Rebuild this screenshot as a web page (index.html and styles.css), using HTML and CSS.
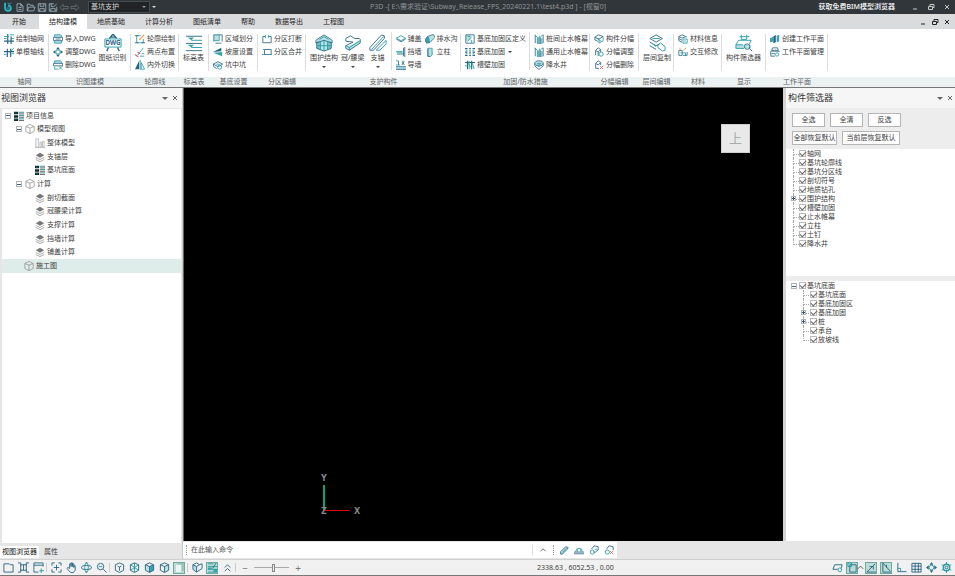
FILE: index.html
```
<!DOCTYPE html>
<html lang="zh-CN">
<head>
    <meta charset="UTF-8">
    <meta name="viewport" content="width=device-width, initial-scale=1.0">
    <title>P3D</title>
    <link rel="stylesheet" href="styles.css">
</head>
<body>

<!-- Icon sprite -->
<svg class="sprite" aria-hidden="true">
    <symbol id="logo" viewBox="0 0 12 12"><path d="M2.500 1v6.500a3.500 3.200 0 1 0 3.500-3.200" fill="none" stroke="#25b9c4" stroke-width="2.200"/><path d="M5.500 1l4.500 1-3 1.500z" fill="#25b9c4"/><circle cx="6" cy="7.500" r="1.200" fill="#25b9c4"/></symbol>
    <symbol id="new" viewBox="0 0 12 12"><path d="M2 1h5l3 3v7H2zM7 1v3h3M4 6h4M4 8.500h4"/></symbol>
    <symbol id="open" viewBox="0 0 12 12"><path d="M1 10.500V1.500h3l1 1.500h4v2M1 10.500l2-5h8.500l-2 5z"/></symbol>
    <symbol id="save" viewBox="0 0 12 12"><path d="M1 1h10v10H1zM3.500 1v3.500h5V1M3 11V7.500h6V11"/></symbol>
    <symbol id="saveas" viewBox="0 0 12 12"><path d="M11 5v6H1V1h6M3.500 1v3.500h3M3 11V7.500h6V11M6 6l5-5"/></symbol>
    <symbol id="undo" viewBox="0 0 12 12"><path d="M.5 6L5 2v2.500h6.500v3H5V10z"/></symbol>
    <symbol id="redo" viewBox="0 0 12 12"><path d="M11.500 6L7 2v2.500H.5v3H7V10z"/></symbol>

    <symbol id="axis" viewBox="0 0 12 12"><path d="M4.500 0v12M8.500 3v9M0 8.500h12" stroke-width="1.400"/><path class="t" d="M0 3h6M0 5.500h3M7 1h5M8 5.500h4"/></symbol>
    <symbol id="axisone" viewBox="0 0 12 12"><path d="M4 2v10M8 2v10M0 5.500h12" stroke-width="1.400"/><path class="t" d="M8 5l4-4M0 9h3M9 8h3"/></symbol>
    <symbol id="dwgin" viewBox="0 0 12 12"><path class="f" d="M2 1h8v3H2zM2 8h8v3H2z"/><path class="t" d="M2 4V1h7l1 1v2M2 8v3h8V8"/><path d="M.5 4h11v4H.5zM3 6h6"/></symbol>
    <symbol id="dwgset" viewBox="0 0 12 12"><path class="n" d="M6 0l2.500 3h-5zM6 12l2.500-3h-5zM0 6l3-2.500v5zM12 6L9 3.500v5z"/><circle class="t" cx="6" cy="6" r="2.500"/></symbol>
    <symbol id="dwgdel" viewBox="0 0 12 12"><path class="f" d="M2 1h8v3H2z"/><path class="t" d="M2 4V1h7l1 1v2M2 8v3h4M7 7.500l4 4M11 7.500l-4 4"/><path d="M.5 4h11v3H.5z"/></symbol>
    <symbol id="outline" viewBox="0 0 12 12"><path class="t" d="M2 10.500V2h5M2 10.500h8V6"/><path d="M0 2h4M0 10.500h4M8 10.500h4"/><path class="o" d="M5 7l6-6" stroke-width="1.500"/></symbol>
    <symbol id="twopt" viewBox="0 0 12 12"><path class="t" d="M3 10l7-9M6 11h5M8 8h3"/><path class="r" d="M0 9l4 3M3 6l3 2" stroke-width="1.500"/></symbol>
    <symbol id="flip" viewBox="0 0 12 12"><path class="n" d="M5 1v10H0z"/><path class="t" d="M7.500 3v8H11.500zM6.200 0v12"/></symbol>
    <symbol id="region" viewBox="0 0 12 12"><path class="f" d="M1 1h6v7H1z"/><path d="M1 9V1h10v8M3 11h7"/><path class="t" d="M7.500 1v7H1"/></symbol>
    <symbol id="slope" viewBox="0 0 12 12"><path class="n" d="M0 6l10-5v4z"/><path class="tf" d="M0 7l11-1v5z"/></symbol>
    <symbol id="pit" viewBox="0 0 12 12"><path d="M.5 5L6 2l5.500 3L6 8zM.5 5v2.500l4 3"/><circle class="t" cx="8" cy="8.500" r="2.500"/><path class="t" d="M4 5h4"/></symbol>
    <symbol id="split" viewBox="0 0 12 12"><path d="M1 10.500V3h3M8 3h3v7.500H1"/><path class="t" d="M4 1v4M8 1v4"/></symbol>
    <symbol id="merge" viewBox="0 0 12 12"><path d="M3 3h8v6H3z"/><path class="t" d="M0 9h4M3 3H1M9 9h3"/></symbol>
    <symbol id="cover" viewBox="0 0 12 12"><path class="t" d="M.5 5L6 2l5.500 3L6 8z"/><path d="M.5 6L6 9.500 11.500 6"/></symbol>
    <symbol id="retain" viewBox="0 0 12 12"><path d="M10.500 0v12M9 1v10M1 8.500h8"/><path class="t" d="M0 5.500h8M1 7h7"/></symbol>
    <symbol id="guide" viewBox="0 0 12 12"><path d="M0 8h12M0 11.500h12M3 1v5M7 1l3 5M10 1L7 6"/><path class="t" d="M0 1h3M0 6h5M0 9.700h12"/></symbol>
    <symbol id="ditch" viewBox="0 0 12 12"><path class="tf" d="M0 7l3-4 3 1v6l-4 1z"/><path class="f" d="M5 3l5-2 1 3-5 6z"/><path d="M0 7l3-4 7-2.500L12 4l-6 6-4 1z"/></symbol>
    <symbol id="column" viewBox="0 0 12 12"><path class="f" d="M4 2h5v8H4z"/><path class="t" d="M3.500 1.500h5v8l-2 2h-3z"/><path d="M3.500 2v9h3"/></symbol>
    <symbol id="reinf" viewBox="0 0 12 12"><path class="f" d="M1 1h6v7H1z"/><path d="M1 11V1h10v10z"/><path class="t" d="M3 9l5-6M3 3h3M8 7v4"/></symbol>
    <symbol id="dots" viewBox="0 0 12 12"><path d="M0 2h3M5 2h2M9 2h3M0 6h3M5 6h2M9 6h3M0 10h3M5 10h2M9 10h3" stroke-width="1.500"/><path class="t" d="M1 4h2M5 4h2M9 4h2M1 8h2M5 8h2M9 8h2"/></symbol>
    <symbol id="groove" viewBox="0 0 12 12"><path d="M3 1v10M8 1v10M0 3h12" stroke-width="1.400"/><path class="t" d="M4 4l3 5M9 4l2 7M0 7h3M5 1v10"/></symbol>
    <symbol id="curtain" viewBox="0 0 12 12"><path d="M1.500 1v10M5 4v8M8 4v8M11 1v10"/><path class="t" d="M1 1l3 3v8M11 1L8 3M6.500 2v10M9.500 5v7"/></symbol>
    <symbol id="well" viewBox="0 0 12 12"><ellipse class="f" cx="6" cy="4" rx="4.500" ry="2.500"/><ellipse cx="6" cy="4" rx="5" ry="3"/><path d="M1 4v3l5 4.500L11 7V4"/><path class="t" d="M4 4h4L6 8z"/></symbol>
    <symbol id="panel" viewBox="0 0 12 12"><path d="M1 4l4-3 6 2-5 3zM1 4v3l4 2"/><path class="t" d="M6 6v5l5-3V4M3 5l6 4"/></symbol>
    <symbol id="paneledit" viewBox="0 0 12 12"><path d="M2 10V4l3-3 3 2v3M2 4l3 2 3-3M5 6v5"/><circle class="t" cx="8.500" cy="8.500" r="2.500"/></symbol>
    <symbol id="paneldel" viewBox="0 0 12 12"><path d="M2 10V4l3-3 3 2v3M2 4l3 2 3-3M2 10h4"/><path class="r" d="M7 7l4 4M11 7l-4 4"/></symbol>
    <symbol id="matinfo" viewBox="0 0 12 12"><path d="M1 3l4-2 4 2-4 2zM1 3v5l4 2M1 5.500l4 2"/><path class="t" d="M6 6h5v5H6zM7.500 8.500h2M9 4l2-1"/></symbol>
    <symbol id="modify" viewBox="0 0 12 12"><path d="M1 4h4v6H1zM6 10h5V6"/><path class="t" d="M3 7h6v4"/><path class="o" d="M6 4l4-3M2 1l1 2"/></symbol>
    <symbol id="plane" viewBox="0 0 12 12"><path class="tf" d="M0 5l4-2v6l-4 1z"/><path class="n" d="M4 3l3-2v9l-3 1z"/><path class="tf" d="M8 2l3-1v8l-3 1z"/></symbol>
    <symbol id="planeman" viewBox="0 0 12 12"><path d="M3 1h6l1 3H2zM1 11V5h10v1M1 11h5M2 8h4"/><circle class="t" cx="8.500" cy="9" r="2"/></symbol>

    <symbol id="level" viewBox="0 0 20 20"><path d="M1 2.500h18M1 10.500h18M1 18.500h18"/><path class="tf" d="M3 4h7l-3 3zM3 12h7l-3 3z"/><path class="t" d="M7 7h12M7 15h12"/></symbol>
    <symbol id="wall" viewBox="0 0 20 20"><path class="f" d="M2 7l8-5 8 5v9l-8 3-8-3z"/><path class="tf" d="M2 8h4v9l-4-1zM14 8h4v8l-4 1z" opacity=".5"/><path d="M1 7l9-6 9 6v3l-9-3-9 3zM2 9v7l8 3 8-3V9"/><path class="t" d="M6 8v10M10 7v12M14 8v10M2 13h16M5 6l5-3 5 3"/></symbol>
    <symbol id="beam" viewBox="0 0 20 20"><path class="f" d="M2 15l10-5 6-4v4L6 18z"/><path d="M2 5l5-3 5 3 5 0 1 1v4L6 18l-4-2v-3l8-4-8-1z"/><path class="t" d="M2 13l4 2 11-7M6 15v3"/></symbol>
    <symbol id="anchor" viewBox="0 0 20 20"><path d="M1 15L14 1l3 1v3L5 18H1z"/><path class="t" d="M3 17L16 3M8 18L19 7v4l-7 7z"/></symbol>
    <symbol id="copyfloor" viewBox="0 0 20 20"><path d="M2 5l7-4 7 4-7 4zM2 9l7 4 4-2M2 13l7 4"/><path class="t" d="M5 5h8M11 12l3-2 5 4v4l-3 1-5-4zM5 11l4 3"/></symbol>
    <symbol id="filter" viewBox="0 0 20 20"><path class="f" d="M1 12h17v4H1z"/><path class="t" d="M5 3h11M7 1v5h6V1M1 12l3-5h14l-2 4M1 12v4h9M1 12h8"/><circle cx="13.500" cy="14" r="3"/><path d="M16 16l3 3"/></symbol>

    <symbol id="layers" viewBox="0 0 12 12"><path d="M1 4l5-3 5 3-5 3z" fill="#777" stroke="none"/><path d="M1 6.500l5 2.500 5-2.500M1 9l5 2.500L11 9" stroke="#999"/></symbol>
    <symbol id="cube" viewBox="0 0 12 12"><path d="M1 3L6 .5 11 3v6l-5 2.500L1 9zM1 3l5 2 5-2M6 5v6" stroke="#999"/></symbol>
    <symbol id="list" viewBox="0 0 12 12"><path d="M0 1h5v3H0zM0 5h5v3H0zM0 9h5v3H0z" fill="#10282b" stroke="none"/><path d="M1 2.500h2M1 10.500h2M6 1.500h6M6 5.500h6M6 9.500h6" stroke="#167d80"/><path d="M6 3.500h6M6 7.500h6M6 11.500h6" stroke="#444"/></symbol>
    <symbol id="bars" viewBox="0 0 12 12"><path d="M1 11V1h3v10zM6 11V5h2v6zM9 11V4h2v7zM0 11.500h12" stroke="#b5b5b5"/></symbol>

    <symbol id="window" viewBox="0 0 12 12"><path d="M1 2h6l1 1h3v8H1z"/></symbol>
    <symbol id="fit" viewBox="0 0 12 12"><path d="M3 3h6v6H3zM0 1h3v3M12 1H9v3M0 11h3V8M12 11H9V8M6 3v6"/></symbol>
    <symbol id="tile" viewBox="0 0 12 12"><path d="M1 8V1h10v4M1 3.500h10M1 8v3h5"/><path class="t" d="M9 7v5M7 9.500h5"/></symbol>
    <symbol id="move" viewBox="0 0 12 12"><path d="M1 4V1h3M8 1h3v3M11 8v3H8M4 11H1V8M6 3v6M3 6h6"/></symbol>
    <symbol id="hand" viewBox="0 0 12 12"><path d="M4 7V2h1.500v3V1H7v4V2h1.500v4V4H10v5l-2 2.500H5L1 7l1-1z"/></symbol>
    <symbol id="orbit" viewBox="0 0 12 12"><ellipse cx="6" cy="6" rx="5.500" ry="2.200"/><ellipse class="t" cx="6" cy="6" rx="2" ry="5"/><path d="M5 1h2M5 11h2"/></symbol>
    <symbol id="zoomicon" viewBox="0 0 12 12"><circle cx="5" cy="5" r="3.500"/><path d="M8 8l3.500 3.500"/><path class="t" d="M3 5h4"/></symbol>
    <symbol id="box" viewBox="0 0 12 12"><path d="M1.500 3L6 1l4.500 2v6L6 11.500 1.500 9z"/><path d="M4 4.500l2 1 2-1M6 5.500v4"/></symbol>
    <symbol id="boxwire" viewBox="0 0 12 12"><path d="M1.500 3L6 1l4.500 2v6L6 11.500 1.500 9z"/><path class="t" d="M1.500 3L6 6l4.500-3M6 1v10M1.500 9L6 6l4.500 3"/></symbol>
    <symbol id="boxdark" viewBox="0 0 12 12"><path class="tf" d="M6 5l4.500-2v6L6 11.500z"/><path class="f" d="M1.500 3L6 5v6L1.500 9z"/><path d="M1.500 3L6 1l4.500 2v6L6 11.500 1.500 9zM1.500 3L6 5l4.500-2M6 5v6"/></symbol>
    <symbol id="boxlight" viewBox="0 0 12 12"><path class="f" d="M6 5l4.500-2v6L6 11.500z"/><path d="M1.500 3L6 1l4.500 2v6L6 11.500 1.500 9zM1.500 3L6 5l4.500-2M6 5v6"/></symbol>
    <symbol id="shaded" viewBox="0 0 12 12"><path d="M2 3l3-2h6v8l-3 2H2z" fill="#9cc4bd" stroke="none"/><path d="M2 3h6v8H2z" fill="#edf5f3" stroke="none"/></symbol>
    <symbol id="section" viewBox="0 0 12 12"><path class="f" d="M1 3l4 2v6L1 8z"/><path d="M1 3l4-2 3 2 3-1v5l-6 4-4-3zM1 3l4 2 3-2M5 5v6"/></symbol>
    <symbol id="props" viewBox="0 0 12 12"><path class="tf" d="M1 6h4v2H1zM7 8h4v3H7z"/><path class="t" d="M1 2h6M1 5h10M1 8h10M1 11h10"/><path d="M6 7l4-6"/></symbol>
    <symbol id="up2" viewBox="0 0 12 12"><path d="M3 6l3-3 3 3M3 10l3-3 3 3"/></symbol>
    <symbol id="up" viewBox="0 0 12 12"><path d="M3 7.500l3-3 3 3" stroke="#555"/></symbol>
    <symbol id="pen" viewBox="0 0 12 12"><path class="f" d="M2 8l6-6 3 2-7 7H2z"/><path d="M2 8l6-6 3 1-1 2-6 6H2z"/><path class="t" d="M4 9l5-5"/></symbol>
    <symbol id="arch" viewBox="0 0 12 12"><path class="t" d="M2 8a4 4 0 0 1 8 0M4 8V5M8 8V5"/><path d="M0 8.500h12M0 10.500h12"/></symbol>
    <symbol id="link" viewBox="0 0 12 12"><path d="M3 5l3-4 5 1v4L7 9 5 8"/><circle class="t" cx="4" cy="8.500" r="2.500"/><path class="t" d="M7 5h3"/></symbol>
    <symbol id="linkdel" viewBox="0 0 12 12"><path d="M3 5l3-4 5 1v4"/><circle class="t" cx="4" cy="8.500" r="2.500"/><path class="r" d="M7 7l4 4M11 7l-4 4"/></symbol>
    <symbol id="view" viewBox="0 0 12 12"><path d="M1 8l2-5h8l-1 4M1 8h5"/><circle class="t" cx="8.500" cy="8.500" r="2"/></symbol>
    <symbol id="snap" viewBox="0 0 12 12"><path d="M3 3h7v8H3z"/><path class="t" d="M1 1h4v4H1z"/></symbol>
    <symbol id="angle" viewBox="0 0 12 12"><path d="M1 11h10M1 11l9-9M4 5h4v3"/></symbol>
    <symbol id="polar" viewBox="0 0 12 12"><path d="M2 1v10h9M2 1l8 9M6 3v3"/></symbol>
    <symbol id="ortho" viewBox="0 0 12 12"><path d="M2 1v9.500h9.500"/><path class="t" d="M2 7h3v3"/></symbol>
    <symbol id="grid" viewBox="0 0 12 12"><path d="M1 1.500h10v9.500H1zM1 4.500h10M1 8h10M4.500 1v10M8 1v10"/></symbol>
    <symbol id="target" viewBox="0 0 12 12"><path class="n" d="M6 0l2 3H4zM6 12l2-3H4zM0 6l3-2.500v5zM12 6L9 3.500v5z"/><circle class="t" cx="6" cy="6" r="2.500"/></symbol>
    <symbol id="gear" viewBox="0 0 12 12"><circle class="t" cx="6" cy="6" r="3.500" stroke-width="1.500"/><path class="t" d="M6 0v3M6 9v3M.8 3l2.600 1.500M8.600 7.500L11.200 9M.8 9l2.600-1.500M8.600 4.500L11.200 3"/><circle cx="6" cy="6" r="1.500"/></symbol>
</svg>

<header class="titlebar">
    <div class="quick">
        <svg class="icon"><use href="#logo"/></svg>
        <button type="button" aria-label="新建"><svg class="icon"><use href="#new"/></svg></button>
        <button type="button" aria-label="打开"><svg class="icon"><use href="#open"/></svg></button>
        <button type="button" aria-label="保存"><svg class="icon"><use href="#save"/></svg></button>
        <button type="button" aria-label="另存为"><svg class="icon"><use href="#saveas"/></svg></button>
        <button type="button" class="dim" aria-label="撤销"><svg class="icon"><use href="#undo"/></svg></button>
        <button type="button" class="dim" aria-label="重做"><svg class="icon"><use href="#redo"/></svg></button>
    </div>
    <div class="mode">
        <select aria-label="专业"><option>基坑支护</option></select>
    </div>
    <button type="button" class="more" aria-label="更多"></button>
    <h1>P3D -[ E:\需求验证\Subway_Release_FPS_20240221.1\test4.p3d ] - [视窗0]</h1>
    <a href="#" class="promo">获取免费BIM模型浏览器</a>
    <div class="win-btns">
        <button type="button" aria-label="最小化"><svg class="winicon" viewBox="0 0 8 8"><path d="M2 6h4"/></svg></button>
        <button type="button" aria-label="还原"><svg class="winicon" viewBox="0 0 8 8"><path d="M1.500 3.500h4v3h-4zM3 3V1.500h4v3H6"/></svg></button>
        <button type="button" aria-label="关闭"><svg class="winicon" viewBox="0 0 8 8"><path d="M2 2l4 4M6 2L2 6"/></svg></button>
    </div>
</header>

<nav class="tabs">
    <button type="button" class="tab first">开始</button>
    <button type="button" class="tab active">结构建模</button>
    <button type="button" class="tab">地质基础</button>
    <button type="button" class="tab">计算分析</button>
    <button type="button" class="tab">图纸清单</button>
    <button type="button" class="tab">帮助</button>
    <button type="button" class="tab">数据导出</button>
    <button type="button" class="tab">工程图</button>
    <div class="win-btns doc-btns">
        <button type="button" aria-label="最小化文档"><svg class="winicon" viewBox="0 0 8 8"><path d="M2 6h4"/></svg></button>
        <button type="button" aria-label="还原文档"><svg class="winicon" viewBox="0 0 8 8"><path d="M1.500 3.500h4v3h-4zM3 3V1.500h4v3H6"/></svg></button>
        <button type="button" aria-label="关闭文档"><svg class="winicon" viewBox="0 0 8 8"><path d="M2 2l4 4M6 2L2 6"/></svg></button>
    </div>
</nav>

<section class="ribbon">
    <div class="group">
        <div class="tools">
            <div class="col">
                <button type="button" class="tool"><svg class="icon"><use href="#axis"/></svg>绘制轴网</button>
                <button type="button" class="tool"><svg class="icon"><use href="#axisone"/></svg>单根轴线</button>
            </div>
        </div>
        <div class="caption">轴网</div>
    </div>
    <div class="group">
        <div class="tools">
            <div class="col">
                <button type="button" class="tool"><svg class="icon"><use href="#dwgin"/></svg>导入DWG</button>
                <button type="button" class="tool"><svg class="icon"><use href="#dwgset"/></svg>调整DWG</button>
                <button type="button" class="tool"><svg class="icon"><use href="#dwgdel"/></svg>删除DWG</button>
            </div>
            <button type="button" class="big">
                <svg viewBox="0 0 20 20"><path d="M6 5l4-5 4 5M8 3.500h4M5 15l-2 4M15 15l2 4" stroke-width="1.500"/><path class="t" d="M1 5.500h18v9H1z"/><text x="10" y="12.500">DWG</text></svg>图纸识别</button>
        </div>
        <div class="caption">识图建模</div>
    </div>
    <div class="group">
        <div class="tools">
            <div class="col">
                <button type="button" class="tool"><svg class="icon"><use href="#outline"/></svg>轮廓绘制</button>
                <button type="button" class="tool"><svg class="icon"><use href="#twopt"/></svg>两点布置</button>
                <button type="button" class="tool"><svg class="icon"><use href="#flip"/></svg>内外切换</button>
            </div>
        </div>
        <div class="caption">轮廓线</div>
    </div>
    <div class="group">
        <div class="tools">
            <button type="button" class="big"><svg><use href="#level"/></svg>标高表</button>
        </div>
        <div class="caption">标高表</div>
    </div>
    <div class="group">
        <div class="tools">
            <div class="col">
                <button type="button" class="tool"><svg class="icon"><use href="#region"/></svg>区域划分</button>
                <button type="button" class="tool"><svg class="icon"><use href="#slope"/></svg>坡度设置</button>
                <button type="button" class="tool"><svg class="icon"><use href="#pit"/></svg>坑中坑</button>
            </div>
        </div>
        <div class="caption">基底设置</div>
    </div>
    <div class="group">
        <div class="tools">
            <div class="col">
                <button type="button" class="tool"><svg class="icon"><use href="#split"/></svg>分区打断</button>
                <button type="button" class="tool"><svg class="icon"><use href="#merge"/></svg>分区合并</button>
            </div>
        </div>
        <div class="caption">分区编辑</div>
    </div>
    <div class="group">
        <div class="tools">
            <button type="button" class="big drop"><svg><use href="#wall"/></svg>围护结构</button>
            <button type="button" class="big drop"><svg><use href="#beam"/></svg>冠/腰梁</button>
            <button type="button" class="big drop"><svg><use href="#anchor"/></svg>支锚</button>
            <div class="col divided">
                <button type="button" class="tool"><svg class="icon"><use href="#cover"/></svg>铺盖</button>
                <button type="button" class="tool"><svg class="icon"><use href="#retain"/></svg>挡墙</button>
                <button type="button" class="tool"><svg class="icon"><use href="#guide"/></svg>导墙</button>
            </div>
            <div class="col">
                <button type="button" class="tool"><svg class="icon"><use href="#ditch"/></svg>排水沟</button>
                <button type="button" class="tool"><svg class="icon"><use href="#column"/></svg>立柱</button>
            </div>
        </div>
        <div class="caption">支护构件</div>
    </div>
    <div class="group">
        <div class="tools">
            <div class="col">
                <button type="button" class="tool"><svg class="icon"><use href="#reinf"/></svg>基底加固区定义</button>
                <button type="button" class="tool drop"><svg class="icon"><use href="#dots"/></svg>基底加固</button>
                <button type="button" class="tool"><svg class="icon"><use href="#groove"/></svg>槽壁加固</button>
            </div>
            <div class="col divided">
                <button type="button" class="tool"><svg class="icon"><use href="#curtain"/></svg>桩间止水帷幕</button>
                <button type="button" class="tool"><svg class="icon"><use href="#curtain"/></svg>通用止水帷幕</button>
                <button type="button" class="tool"><svg class="icon"><use href="#well"/></svg>降水井</button>
            </div>
        </div>
        <div class="caption">加固/防水措施</div>
    </div>
    <div class="group">
        <div class="tools">
            <div class="col">
                <button type="button" class="tool"><svg class="icon"><use href="#panel"/></svg>构件分幅</button>
                <button type="button" class="tool"><svg class="icon"><use href="#paneledit"/></svg>分幅调整</button>
                <button type="button" class="tool"><svg class="icon"><use href="#paneldel"/></svg>分幅删除</button>
            </div>
        </div>
        <div class="caption">分幅编辑</div>
    </div>
    <div class="group">
        <div class="tools">
            <button type="button" class="big"><svg><use href="#copyfloor"/></svg>层间复制</button>
        </div>
        <div class="caption">层间编辑</div>
    </div>
    <div class="group">
        <div class="tools">
            <div class="col">
                <button type="button" class="tool"><svg class="icon"><use href="#matinfo"/></svg>材料信息</button>
                <button type="button" class="tool"><svg class="icon"><use href="#modify"/></svg>交互修改</button>
            </div>
        </div>
        <div class="caption">材料</div>
    </div>
    <div class="group">
        <div class="tools">
            <button type="button" class="big"><svg><use href="#filter"/></svg>构件筛选器</button>
        </div>
        <div class="caption">显示</div>
    </div>
    <div class="group">
        <div class="tools">
            <div class="col">
                <button type="button" class="tool"><svg class="icon"><use href="#plane"/></svg>创建工作平面</button>
                <button type="button" class="tool"><svg class="icon"><use href="#planeman"/></svg>工作平面管理</button>
            </div>
        </div>
        <div class="caption">工作平面</div>
    </div>
    <div class="group rest"><div class="tools"></div><div class="caption"></div></div>
</section>

<main class="workspace">
    <aside class="left">
        <div class="panel-head">
            <h2>视图浏览器</h2>
            <button type="button" class="caret" aria-label="菜单"></button>
            <button type="button" aria-label="关闭"><svg class="winicon" viewBox="0 0 8 8"><path d="M2 2l4 4M6 2L2 6"/></svg></button>
        </div>
        <div class="view-box">
            <ul class="view-tree">
                <li><button type="button" class="exp" aria-label="折叠"></button><svg class="icon"><use href="#list"/></svg>项目信息</li>
                <li class="l1"><button type="button" class="exp" aria-label="折叠"></button><svg class="icon"><use href="#cube"/></svg>模型视图</li>
                <li class="l2"><svg class="icon"><use href="#bars"/></svg>整体模型</li>
                <li class="l2"><svg class="icon"><use href="#layers"/></svg>支锚层</li>
                <li class="l2"><svg class="icon"><use href="#list"/></svg>基坑底面</li>
                <li class="l1"><button type="button" class="exp" aria-label="折叠"></button><svg class="icon"><use href="#cube"/></svg>计算</li>
                <li class="l2"><svg class="icon"><use href="#layers"/></svg>剖切截面</li>
                <li class="l2"><svg class="icon"><use href="#layers"/></svg>冠腰梁计算</li>
                <li class="l2"><svg class="icon"><use href="#layers"/></svg>支撑计算</li>
                <li class="l2"><svg class="icon"><use href="#layers"/></svg>挡墙计算</li>
                <li class="l2"><svg class="icon"><use href="#layers"/></svg>铺盖计算</li>
                <li class="l1 leaf selected"><svg class="icon"><use href="#cube"/></svg>施工图</li>
            </ul>
        </div>
        <div class="dock-tabs">
            <button type="button" class="active">视图浏览器</button>
            <button type="button">属性</button>
        </div>
    </aside>

    <div class="main">
        <div class="upper">
            <div class="canvas">
                <div class="navcube">上</div>
                <svg class="ucs" viewBox="0 0 44 44">
                    <path d="M5 11v26" stroke="#0aa37c" stroke-width="2"/>
                    <path d="M5 36.500h26" stroke="#e00808" stroke-width="1"/>
                    <text x="5" y="7">Y</text>
                    <text x="38" y="40">X</text>
                    <text x="5" y="40">Z</text>
                </svg>
            </div>
            <aside class="right">
                <div class="panel-head">
                    <h2>构件筛选器</h2>
                    <button type="button" class="caret" aria-label="菜单"></button>
                    <button type="button" aria-label="关闭"><svg class="winicon" viewBox="0 0 8 8"><path d="M2 2l4 4M6 2L2 6"/></svg></button>
                </div>
                <div class="filter-btns">
                    <div>
                        <button type="button">全选</button>
                        <button type="button">全清</button>
                        <button type="button">反选</button>
                    </div>
                    <div class="wide">
                        <button type="button">全部恢复默认</button>
                        <button type="button">当前层恢复默认</button>
                    </div>
                </div>
                <ul class="checks types">
                    <li><label><input type="checkbox" checked>轴网</label></li>
                    <li><label><input type="checkbox" checked>基坑轮廓线</label></li>
                    <li><label><input type="checkbox" checked>基坑分区线</label></li>
                    <li><label><input type="checkbox" checked>剖切符号</label></li>
                    <li><label><input type="checkbox" checked>地质钻孔</label></li>
                    <li><button type="button" class="exp plus" aria-label="展开"></button><label><input type="checkbox" checked>围护结构</label></li>
                    <li><label><input type="checkbox" checked>槽壁加固</label></li>
                    <li><label><input type="checkbox" checked>止水帷幕</label></li>
                    <li><label><input type="checkbox" checked>立柱</label></li>
                    <li><label><input type="checkbox" checked>土钉</label></li>
                    <li><label><input type="checkbox" checked>降水井</label></li>
                </ul>
                <ul class="checks floors">
                    <li>
                        <button type="button" class="exp" aria-label="折叠"></button><label><input type="checkbox" checked>基坑底面</label>
                        <ul>
                            <li><label><input type="checkbox" checked>基坑底面</label></li>
                            <li><label><input type="checkbox" checked>基底加固区</label></li>
                            <li><button type="button" class="exp plus" aria-label="展开"></button><label><input type="checkbox" checked>基底加固</label></li>
                            <li><button type="button" class="exp plus" aria-label="展开"></button><label><input type="checkbox" checked>桩</label></li>
                            <li><label><input type="checkbox" checked>承台</label></li>
                            <li><label><input type="checkbox" checked>放坡线</label></li>
                        </ul>
                    </li>
                </ul>
            </aside>
        </div>
        <div class="command">
            <div class="command-box">
                <input type="text" aria-label="命令" placeholder="在此输入命令">
                <button type="button" aria-label="历史"><svg class="icon"><use href="#up"/></svg></button>
                <div class="draw-btns">
                    <button type="button" aria-label="测量"><svg class="icon"><use href="#pen"/></svg></button>
                    <button type="button" aria-label="弧顶"><svg class="icon"><use href="#arch"/></svg></button>
                    <button type="button" aria-label="连接"><svg class="icon"><use href="#link"/></svg></button>
                    <button type="button" aria-label="断开"><svg class="icon"><use href="#linkdel"/></svg></button>
                </div>
            </div>
        </div>
    </div>
</main>

<footer class="status">
    <div class="status-left">
        <button type="button" aria-label="窗口"><svg class="icon"><use href="#window"/></svg></button>
        <button type="button" aria-label="全图"><svg class="icon"><use href="#fit"/></svg></button>
        <button type="button" aria-label="新视窗"><svg class="icon"><use href="#tile"/></svg></button>
        <i></i>
        <button type="button" aria-label="居中"><svg class="icon"><use href="#move"/></svg></button>
        <button type="button" aria-label="平移"><svg class="icon"><use href="#hand"/></svg></button>
        <button type="button" aria-label="旋转"><svg class="icon"><use href="#orbit"/></svg></button>
        <button type="button" aria-label="缩放"><svg class="icon"><use href="#zoomicon"/></svg></button>
        <i></i>
        <button type="button" aria-label="线框"><svg class="icon"><use href="#box"/></svg></button>
        <button type="button" aria-label="隐线"><svg class="icon"><use href="#boxwire"/></svg></button>
        <button type="button" aria-label="着色"><svg class="icon"><use href="#boxdark"/></svg></button>
        <button type="button" aria-label="透明"><svg class="icon"><use href="#boxlight"/></svg></button>
        <button type="button" class="on" aria-label="真实"><svg class="icon"><use href="#shaded"/></svg></button>
        <i></i>
        <button type="button" aria-label="剖切"><svg class="icon"><use href="#section"/></svg></button>
        <button type="button" class="on" aria-label="属性"><svg class="icon"><use href="#props"/></svg></button>
        <button type="button" aria-label="收起"><svg class="icon"><use href="#up2"/></svg></button>
        <i></i>
        <button type="button" class="sign" aria-label="缩小">−</button>
        <input type="range" aria-label="比例" min="0" max="100" value="55">
        <button type="button" class="sign" aria-label="放大">+</button>
    </div>
    <div class="coords">2338.63 , 6052.53 , 0.00</div>
    <div class="status-right">
        <button type="button" aria-label="视图"><svg class="icon"><use href="#view"/></svg></button>
        <button type="button" class="on" aria-label="捕捉"><svg class="icon"><use href="#snap"/></svg></button>
        <button type="button" class="tiny" aria-label="捕捉设置"><svg class="icon"><use href="#up"/></svg></button>
        <button type="button" class="on" aria-label="角度"><svg class="icon"><use href="#angle"/></svg></button>
        <button type="button" class="on" aria-label="极轴"><svg class="icon"><use href="#polar"/></svg></button>
        <button type="button" aria-label="正交"><svg class="icon"><use href="#ortho"/></svg></button>
        <button type="button" aria-label="栅格"><svg class="icon"><use href="#grid"/></svg></button>
        <button type="button" aria-label="定位"><svg class="icon"><use href="#target"/></svg></button>
        <button type="button" aria-label="设置"><svg class="icon"><use href="#gear"/></svg></button>
    </div>
</footer>

</body>
</html>
```
FILE: styles.css
```
* {
    box-sizing: border-box;
}

body {
    margin: 0;
    min-height: 100vh;
    display: flex;
    flex-direction: column;
    background-color: #f0f0f0;
    color: #404040;
    font-family: "Noto Sans", "Noto Sans CJK SC", sans-serif;
    font-size: 7px;
    line-height: 10px;
    white-space: nowrap;
}

h1, h2, ul {
    margin: 0;
    padding: 0;
    font-weight: normal;
    list-style: none;
}

button, input, select {
    margin: 0;
    padding: 0;
    border: none;
    background: none;
    color: inherit;
    font: inherit;
}

button {
    display: flex;
    align-items: center;
    justify-content: center;
    flex-shrink: 0;
}

/* Icons */
.sprite {
    position: absolute;
    width: 0;
    height: 0;
}

.icon {
    width: 10px;
    height: 10px;
    flex-shrink: 0;
    fill: none;
    stroke: #2a6684;
    stroke-width: 1;
}

.t { stroke: #249ba6; }
.r { stroke: #e06666; }
.o { stroke: #e0a050; }
.n { fill: #2a6684; stroke: none; }
.f { fill: #b9e2e6; stroke: none; }
.tf { fill: #3aa5ad; stroke: none; }

.winicon {
    width: 8px;
    height: 8px;
    fill: none;
    stroke: currentColor;
    stroke-width: 1;
}

/* Title bar */
.titlebar {
    display: flex;
    align-items: center;
    height: 14px;
    background-color: #31363a;
    color: #8f9497;
}

.quick {
    display: flex;
    align-items: center;
    gap: 1px;
    padding-left: 3px;
}

.quick button .icon {
    height: 9px;
    stroke: #a9c3cf;
}

.quick .dim .icon {
    stroke: #6f7a80;
}

.quick > .icon {
    margin-right: 1px;
}

.mode {
    width: 62px;
    height: 12px;
    margin-left: 8px;
    position: relative;
    border: 1px solid #464b4f;
    background-color: #212426;
    color: #d8d8d8;
}

.mode::after, .caret::after, .drop::after, .more::after {
    content: "";
    border: 2px solid transparent;
    border-top-color: currentColor;
    border-bottom: none;
}

.mode::after {
    position: absolute;
    right: 3px;
    top: 4px;
    color: #999;
}

.mode select {
    appearance: none;
    display: block;
    width: 100%;
    padding-left: 2px;
    line-height: 10px;
}

.more {
    width: 8px;
    color: #ddd;
}

.titlebar h1 {
    flex: 1;
    padding-left: 212px;
    font-size: 7px;
}

.promo {
    color: #fff;
    font-weight: 500;
    text-decoration: none;
}

.win-btns {
    display: flex;
    gap: 8px;
    margin-left: 16px;
    padding-right: 4px;
    color: #c8c8c8;
}

/* Tabs */
.tabs {
    display: flex;
    height: 15px;
    background-color: #dadbdc;
}

.tab {
    padding: 0 10px;
    color: #222;
}

.tab.first {
    padding: 0 13px 0 12px;
}

.tab.active {
    background-color: #fff;
}

.doc-btns {
    margin-left: auto;
    padding-right: 4px;
    gap: 4px;
    color: #222;
}

/* Ribbon */
.ribbon {
    display: grid;
    grid-template-columns: 49px 82px 48px 30px 49px 48px 155px 129px 49px 35px 48px 44px 62px 1fr;
    background-color: #fff;
    border-bottom: 1px solid #777;
}

.group {
    position: relative;
}

.tools {
    display: flex;
    gap: 3px;
    height: 48px;
    padding: 3px 0 0 4px;
}

.group::after {
    content: "";
    position: absolute;
    right: 0;
    top: 5px;
    width: 1px;
    height: 37px;
    background-color: #dcdcdc;
}

.group.rest::after {
    display: none;
}

.caption {
    height: 10px;
    background-color: #ecf1f1;
    color: #5c6366;
    text-align: center;
}

.tool {
    height: 13px;
    gap: 2px;
    justify-content: flex-start;
}

.tool.drop::after {
    margin-left: 1px;
}

.divided {
    padding-left: 4px;
    border-left: 1px solid #dcdcdc;
    height: 38px;
}

.big {
    flex-direction: column;
    justify-content: flex-start;
    align-self: flex-start;
    min-width: 20px;
    padding-top: 2px;
}

.big svg {
    width: 18px;
    height: 18px;
    margin-bottom: 1px;
    fill: none;
    stroke: #2a6684;
    stroke-width: 1;
}

.big text {
    fill: #2a6684;
    stroke: none;
    font-size: 7px;
    font-weight: bold;
    text-anchor: middle;
}

.big.drop::after {
    margin-top: 3px;
}

/* Workspace */
.workspace {
    flex: 1;
    display: flex;
}

.left {
    width: 183px;
    display: flex;
    flex-direction: column;
    border-right: 1px solid #c8c8c8;
    background-color: #e6e6e6;
}

.panel-head {
    display: flex;
    align-items: center;
    gap: 2px;
    height: 20px;
    padding: 0 3px 0 1px;
    background-color: #f6f6f6;
    color: #666;
}

.panel-head h2 {
    flex: 1;
    font-size: 9px;
    color: #333;
}

.caret {
    width: 8px;
    height: 8px;
}

.caret::after {
    border-width: 3px;
    border-bottom: none;
}

.view-box {
    flex: 1;
    margin: 1px 1px 0 2px;
    background-color: #fff;
}

.view-tree {
    display: grid;
    grid-auto-rows: 1fr;
    height: 164px;
}

.view-tree li {
    display: flex;
    align-items: center;
    gap: 2px;
    padding-left: 3px;
}

.view-tree .l1 {
    padding-left: 14px;
}

.view-tree .l2 {
    padding-left: 33px;
}

.view-tree .leaf {
    padding-left: 22px;
}

.view-tree .selected {
    background-color: #dfedea;
}

.exp {
    width: 6px;
    height: 6px;
    border: 1px solid #b0b5ba;
    background: linear-gradient(#47618f, #47618f) center / 4px 1px no-repeat #fff;
}

.checks .plus {
    width: 5px;
    height: 5px;
    background: linear-gradient(#2a50a8, #2a50a8) center / 3px 1px no-repeat, linear-gradient(#2a50a8, #2a50a8) center / 1px 3px no-repeat #fff;
}

.view-tree .exp {
    margin-right: 1px;
}

.dock-tabs {
    display: flex;
    height: 16px;
    padding: 3px 0 1px;
}

.dock-tabs button {
    padding: 0 2px;
    margin-right: 3px;
}

.dock-tabs .active {
    background-color: #fff;
    color: #111;
}

.main {
    flex: 1;
    display: flex;
    flex-direction: column;
}

.upper {
    flex: 1;
    display: flex;
}

.canvas {
    flex: 1;
    position: relative;
    border-left: 1px solid #666;
    background-color: #000;
}

.navcube {
    position: absolute;
    top: 36px;
    right: 33px;
    width: 29px;
    height: 29px;
    border: 1px solid #d0d0d0;
    background-color: #e9e9e9;
    color: #aaa;
    font-size: 13px;
    line-height: 27px;
    text-align: center;
}

.ucs {
    position: absolute;
    left: 135px;
    bottom: 23px;
    width: 44px;
    height: 44px;
    overflow: visible;
    fill: none;
}

.ucs text {
    fill: #858585;
    font-family: "DejaVu Sans", sans-serif;
    font-size: 8px;
    font-weight: bold;
    text-anchor: middle;
}

/* Component filter */
.right {
    width: 172px;
    display: flex;
    flex-direction: column;
    border-left: 3px solid #d4d4d4;
    background-color: #ededed;
}

.right .panel-head {
    padding: 0 1px 0 2px;
}

.filter-btns {
    display: flex;
    flex-direction: column;
    gap: 4px;
    padding: 5px 6px;
    height: 41px;
}

.filter-btns div {
    display: flex;
    gap: 5px;
}

.filter-btns button {
    width: 33px;
    height: 14px;
    border: 1px solid #b5b5b5;
    background-color: #fdfdfd;
}

.filter-btns .wide button {
    width: 45px;
}

.filter-btns .wide button + button {
    width: 58px;
}

.checks {
    background-color: #fff;
    line-height: 9px;
}

.types {
    height: 127px;
    margin-bottom: 5px;
}

.floors {
    flex: 1;
}

.checks li {
    position: relative;
    padding-left: 13px;
}

.checks li li {
    padding-left: 11px;
}

.checks label {
    display: flex;
    align-items: center;
    gap: 1px;
    height: 9px;
}

.checks .exp {
    position: absolute;
    z-index: 1;
    left: 5px;
    top: 2px;
}

.checks li li .exp {
    left: 2px;
}

/* dotted branch lines */
.types > li::before, .floors li li::before {
    content: "";
    position: absolute;
    left: 7px;
    top: 0;
    width: 5px;
    height: 5px;
    border-left: 1px dotted #aaa;
    border-bottom: 1px dotted #aaa;
}

.types > li:not(:last-child)::after, .floors li li:not(:last-child)::after {
    content: "";
    position: absolute;
    left: 7px;
    top: 5px;
    height: 4px;
    border-left: 1px dotted #aaa;
}

.floors li li::before, .floors li li:not(:last-child)::after {
    left: 4px;
}

.checks input {
    appearance: none;
    width: 7px;
    height: 7px;
    border: 1px solid #bbb;
    background-color: #fff;
}

.checks input:checked::before {
    content: "";
    display: block;
    width: 5px;
    height: 3px;
    border-left: 1px solid #666;
    border-bottom: 1px solid #666;
    transform: rotate(-45deg);
}

/* Command line */
.command {
    height: 18px;
    padding: 1px 0;
    background-color: #e6e6e6;
}

.command-box {
    display: flex;
    align-items: center;
    width: 434px;
    height: 16px;
    padding-left: 3px;
    background-color: #fff;
}

.command-box > input {
    flex: 1;
    padding-left: 4px;
    border-left: 1px dotted #999;
    border-right: 1px solid #ddd;
    outline: none;
}

.command-box > input::placeholder {
    color: #555;
}

.command-box > button {
    width: 20px;
}

.draw-btns {
    display: flex;
    gap: 5px;
    padding: 0 3px 0 5px;
    border-left: 1px dotted #999;
}

/* Status bar */
.status {
    display: flex;
    align-items: center;
    height: 17px;
    padding: 0 3px 0 2px;
    border-top: 1px solid #d0d0d0;
    border-bottom: 1px solid #777;
    background-color: #f1f1f1;
}

.status-left, .status-right {
    display: flex;
    align-items: center;
    gap: 3px;
}

.status button {
    width: 12px;
    height: 12px;
}

.status .icon {
    width: 11px;
    height: 11px;
}

.status .on {
    background-color: #b9dcd4;
    border: 1px solid #6fa99d;
}

.status i {
    width: 1px;
    height: 9px;
    margin-left: -1px;
    background-color: #ccc;
}

.status .sign {
    color: #777;
    font-size: 10px;
}

.status .tiny {
    width: 5px;
    margin: 0 -1px 0 -3px;
}

.status input {
    appearance: none;
    width: 35px;
    height: 10px;
    background: linear-gradient(#aaa, #aaa) center / 100% 1px no-repeat;
}

.status input::-webkit-slider-thumb {
    appearance: none;
    width: 3px;
    height: 8px;
    border: 1px solid #888;
    background-color: #eee;
}

.coords {
    flex: 1;
    padding-left: 233px;
}
```
